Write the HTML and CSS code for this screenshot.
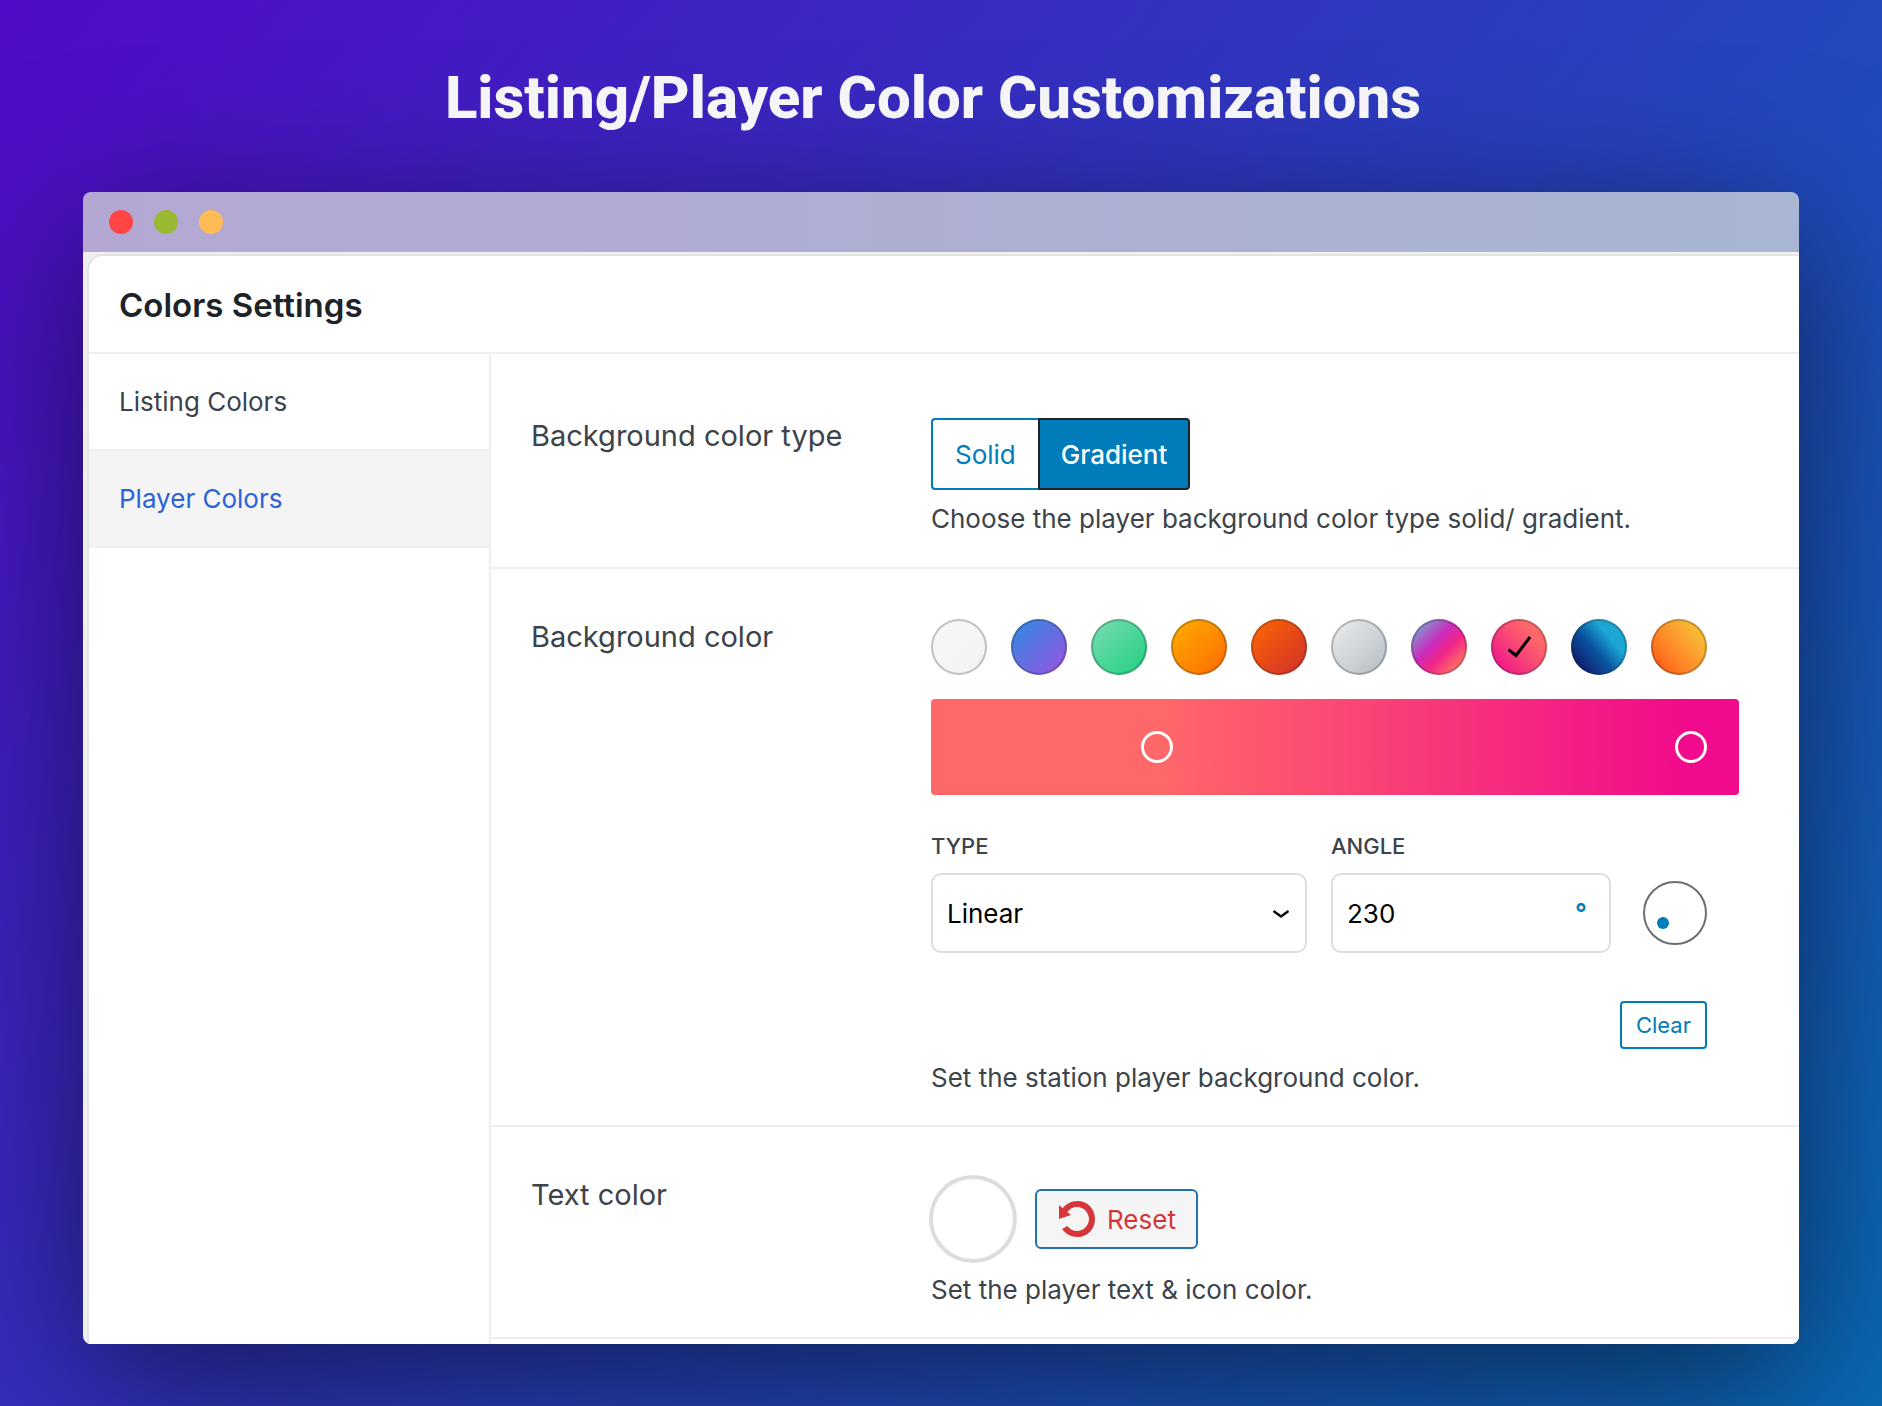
FILE: index.html
```html
<!DOCTYPE html>
<html lang="en">
<head>
<meta charset="utf-8">
<meta name="viewport" content="width=device-width, initial-scale=1">
<title>Listing/Player Color Customizations</title>
<link rel="stylesheet" href="styles.css">
</head>
<body>
<h1 class="page-title">Listing/Player Color Customizations</h1>
<main class="window">
  <div class="titlebar">
    <span class="light light-red"></span>
    <span class="light light-green"></span>
    <span class="light light-yellow"></span>
  </div>
  <div class="window-body">
    <div class="panel">
      <header class="panel-header"><h2 class="panel-title">Colors Settings</h2></header>
      <div class="panel-columns">
        <nav class="sidebar">
          <a class="tab" href="#listing">Listing Colors</a>
          <a class="tab tab-active" href="#player" aria-current="page">Player Colors</a>
        </nav>
        <div class="fields">
          <section class="field field-first">
            <h3 class="field-label">Background color type</h3>
            <div class="field-control">
              <div class="segments">
                <button type="button" class="segment" aria-pressed="false">Solid</button>
                <button type="button" class="segment segment-active" aria-pressed="true">Gradient</button>
              </div>
              <p class="help">Choose the player background color type solid/ gradient.</p>
            </div>
          </section>
          <section class="field">
            <h3 class="field-label">Background color</h3>
            <div class="field-control">
              <div class="swatches">
                <button type="button" class="swatch swatch-white" aria-label="White"></button>
                <button type="button" class="swatch swatch-violet" aria-label="Blue to violet"></button>
                <button type="button" class="swatch swatch-green" aria-label="Green"></button>
                <button type="button" class="swatch swatch-amber" aria-label="Amber to orange"></button>
                <button type="button" class="swatch swatch-red" aria-label="Orange to red"></button>
                <button type="button" class="swatch swatch-gray" aria-label="Gray"></button>
                <button type="button" class="swatch swatch-cosmic" aria-label="Violet to coral"></button>
                <button type="button" class="swatch swatch-pink" aria-label="Pink to coral" aria-pressed="true">
                  <svg class="check" viewBox="0 0 24 24" aria-hidden="true"><path d="M1.500 14.500 9 20.500 23 2" fill="none" stroke="#000" stroke-width="3"/></svg>
                </button>
                <button type="button" class="swatch swatch-ocean" aria-label="Navy to sky"></button>
                <button type="button" class="swatch swatch-sun" aria-label="Orange to yellow"></button>
              </div>
              <div class="gradient-bar">
                <button type="button" class="stop" style="left: 28%" aria-label="First color stop"></button>
                <button type="button" class="stop" style="left: 94%" aria-label="Second color stop"></button>
              </div>
              <div class="options">
                <div class="option option-type">
                  <label class="option-label" for="type">Type</label>
                  <div class="input-wrap">
                    <select id="type" class="input"><option>Linear</option><option>Radial</option></select>
                    <svg class="chevron" viewBox="0 0 18 10" aria-hidden="true"><path d="M1.500 2 9 7.500 16.500 2" fill="none" stroke="#000" stroke-width="2.300"/></svg>
                  </div>
                </div>
                <div class="option option-angle">
                  <label class="option-label" for="angle">Angle</label>
                  <div class="input-wrap">
                    <input id="angle" class="input" type="text" inputmode="numeric" value="230">
                    <span class="unit">°</span>
                  </div>
                </div>
                <button type="button" class="dial" aria-label="Angle picker"><span class="dial-dot"></span></button>
              </div>
              <div class="actions"><button type="button" class="clear">Clear</button></div>
              <p class="help">Set the station player background color.</p>
            </div>
          </section>
          <section class="field">
            <h3 class="field-label">Text color</h3>
            <div class="field-control">
              <div class="color-row">
                <button type="button" class="color-pick" aria-label="Text color"></button>
                <button type="button" class="reset">
                  <svg class="reset-icon" viewBox="0 0 20 20" aria-hidden="true"><path fill="currentColor" d="M10.250 1.020c5.100 0 8.750 4.040 8.750 9s-3.650 9-8.750 9c-3.200 0-6.020-1.590-7.680-3.990l2.590-1.520c1.100 1.500 2.860 2.510 4.840 2.510 3.300 0 6-2.790 6-6s-2.700-6-6-6c-1.970 0-3.720 1-4.820 2.490L7 8.020l-6 2v-7L2.890 4.600c1.690-2.170 4.360-3.580 7.360-3.580z"/></svg>
                  Reset
                </button>
              </div>
              <p class="help">Set the player text &amp; icon color.</p>
            </div>
          </section>
        </div>
      </div>
    </div>
  </div>
</main>
</body>
</html>
```
FILE: styles.css
```css
* { box-sizing: border-box; }

body {
  margin: 0;
  min-height: 100vh;
  padding: 58px 83px 62px;
  background: linear-gradient(128deg, #500ac5 0%, #2f36bf 45%, #0a6ab5 100%);
  color: #3c434a;
  font-family: Inter, "Noto Sans", sans-serif;
  font-size: 26px;
  overflow-x: hidden;
}

h1, h2, h3, p { margin: 0; }

button, input, select {
  margin: 0;
  padding: 0;
  font: inherit;
  color: inherit;
}

button { cursor: pointer; }

.page-title {
  margin-bottom: 54px;
  padding-right: 16px;
  color: #f5f5f8;
  font: 800 60px/80px Roboto, sans-serif;
  text-align: center;
}

.window {
  border-radius: 8px;
  box-shadow: 0 40px 160px rgba(0, 0, 0, 0.55);
}

.titlebar {
  display: flex;
  align-items: center;
  gap: 21px;
  height: 60px;
  padding: 0 26px;
  border-radius: 8px 8px 0 0;
  background: linear-gradient(90deg, #b4a8d3, #a8b5d3);
}

.light {
  width: 24px;
  height: 24px;
  border-radius: 50%;
}

.light-red { background: #ff4545; }
.light-green { background: #99b933; }
.light-yellow { background: #ffbb55; }

.window-body {
  padding: 2px 0 0 4px;
  border-radius: 0 0 8px 8px;
  background: #f0f0f1;
  overflow: hidden;
}

.panel {
  border: solid #e4e4e4;
  border-width: 2px 0 0 2px;
  border-radius: 16px 0 0 0;
  background: #fff;
}

.panel-header {
  padding: 29px 30px 27px;
  border-bottom: 2px solid #eee;
}

.panel-title {
  color: #1d2327;
  font-size: 33px;
  line-height: 40px;
  font-weight: 600;
}

.panel-columns { display: flex; }

.sidebar {
  flex: 0 0 402px;
  border-right: 2px solid #eee;
}

.tab {
  display: block;
  padding: 28px 30px;
  border-bottom: 2px solid #eee;
  color: #3c434a;
  line-height: 39px;
  text-decoration: none;
}

.tab-active {
  background: #f4f4f4;
  color: #2b62d9;
}

.fields {
  flex: 1;
  min-width: 0;
  padding-bottom: 5px;
}

.field {
  display: flex;
  padding: 50px 60px 26px 40px;
  border-bottom: 2px solid #eee;
}

.field-first { padding: 64px 60px 27px 40px; }

.field-label {
  flex: 0 0 400px;
  font-size: 29px;
  line-height: 36px;
  font-weight: 400;
}

.field-control {
  flex: 1;
  min-width: 0;
}

.help {
  margin-top: 8px;
  line-height: 42px;
}

.segments { display: flex; }

.segment {
  height: 72px;
  padding: 0 22px;
  border: 2px solid #007cba;
  border-right: 0;
  border-radius: 4px 0 0 4px;
  background: #fff;
  color: #007cba;
}

.segment-active {
  padding: 0 21px;
  border: 2px solid #1d2327;
  border-radius: 0 4px 4px 0;
  background: #007cba;
  color: #fff;
  font-weight: 500;
}

.swatches {
  display: flex;
  justify-content: space-between;
  margin-right: 32px;
}

.swatch {
  display: flex;
  align-items: center;
  justify-content: center;
  width: 56px;
  height: 56px;
  border: 0;
  border-radius: 50%;
  box-shadow: inset 0 0 0 2px rgba(30, 35, 45, 0.25);
}

.swatch-white { background: linear-gradient(135deg, #f8f8f8, #f2f2f3); }
.swatch-violet { background: linear-gradient(135deg, #2c8de3, #9b51e0); }
.swatch-green { background: linear-gradient(135deg, #7adcb4, #1fd07e); }
.swatch-amber { background: linear-gradient(135deg, #fcb000, #ff6900); }
.swatch-red { background: linear-gradient(135deg, #ff6900, #cf2e2e); }
.swatch-gray { background: linear-gradient(135deg, #eeeeee, #b3bcc3); }
.swatch-cosmic { background: linear-gradient(135deg, #7ba0d4 10%, #cc2bbb 42%, #f2268a 60%, #ff6866 82%); }
.swatch-pink { background: linear-gradient(50deg, #f0158c 10%, #ff6868 75%); }
.swatch-ocean { background: linear-gradient(50deg, #10186b 12%, #0a57a2 45%, #1ba6d3 68%); }
.swatch-sun { background: linear-gradient(50deg, #ff5a12 10%, #ff8527 38%, #f8b733 78%); }

.check {
  width: 24px;
  height: 24px;
}

.gradient-bar {
  position: relative;
  height: 96px;
  margin-top: 24px;
  border-radius: 4px;
  background: linear-gradient(90deg, #ff6868 28%, #f10a8b 94%);
}

.stop {
  position: absolute;
  top: 50%;
  width: 32px;
  height: 32px;
  margin: -16px;
  border: 3px solid #fff;
  border-radius: 50%;
  background: transparent;
}

.options {
  display: flex;
  align-items: flex-end;
  margin: 36px 32px 0 0;
}

.option-type {
  flex: 1;
  margin-right: 24px;
}

.option-angle {
  flex: 0 0 280px;
  margin-right: 32px;
}

.option-label {
  display: block;
  margin-bottom: 12px;
  font-size: 22px;
  line-height: 30px;
  font-weight: 500;
  text-transform: uppercase;
}

.input-wrap { position: relative; }

.input {
  display: block;
  width: 100%;
  height: 80px;
  padding: 0 14px;
  border: 2px solid #ddd;
  border-radius: 10px;
  background: #fff;
  color: #000;
  appearance: none;
}

.chevron {
  position: absolute;
  top: 36px;
  right: 17px;
  width: 18px;
  height: 10px;
  pointer-events: none;
}

.unit {
  position: absolute;
  top: 20px;
  right: 24px;
  color: #007cba;
  line-height: 40px;
  font-weight: 600;
}

.dial {
  position: relative;
  width: 64px;
  height: 64px;
  margin-bottom: 8px;
  border: 2px solid #6a6e72;
  border-radius: 50%;
  background: #fff;
}

.dial-dot {
  position: absolute;
  top: 34px;
  left: 12px;
  width: 12px;
  height: 12px;
  border-radius: 50%;
  background: #007cba;
}

.actions {
  display: flex;
  justify-content: flex-end;
  margin: 48px 32px 0 0;
}

.clear {
  height: 48px;
  padding: 0 14px;
  border: 2px solid #007cba;
  border-radius: 4px;
  background: #fff;
  color: #007cba;
  font-size: 22px;
}

.color-row {
  display: flex;
  align-items: center;
  gap: 20px;
}

.color-pick {
  width: 84px;
  height: 84px;
  border: 2px solid #dcdede;
  border-radius: 50%;
  background: #fff;
  box-shadow: 0 0 0 2px #dcdede;
}

.reset {
  display: flex;
  align-items: center;
  gap: 10px;
  height: 60px;
  padding: 0 20px;
  border: 2px solid #2271b1;
  border-radius: 6px;
  background: #f5f5f5;
  color: #d63638;
}

.reset-icon {
  width: 40px;
  height: 40px;
}
```
